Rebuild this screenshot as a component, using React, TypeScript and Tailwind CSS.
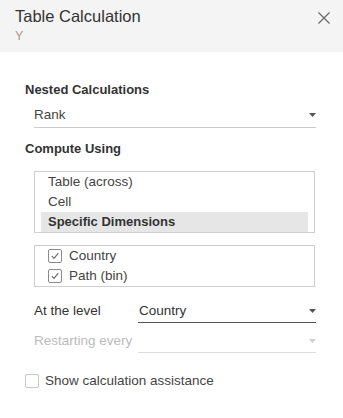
import React from "react";

const Caret = ({ light = false }: { light?: boolean }) => (
  <svg width="7" height="4" viewBox="0 0 7 4" className="shrink-0">
    <path d="M0 0 L7 0 L3.5 4 Z" fill={light ? "#cfcfcf" : "#555"} />
  </svg>
);

const Check = ({ checked }: { checked: boolean }) => (
  <div
    className={`w-[14px] h-[14px] shrink-0 rounded-[2px] border ${
      checked ? "border-[#8a8a8a]" : "border-[#c8c8c8]"
    } bg-white flex items-center justify-center`}
  >
    {checked && (
      <svg width="10" height="10" viewBox="0 0 10 10">
        <path d="M1.8 5.2 L4 7.4 L8.3 2.2" fill="none" stroke="#666" strokeWidth="1.1" />
      </svg>
    )}
  </div>
);

export default function App() {
  return (
    <div
      className="w-[343px] h-[418px] bg-white text-[#333] overflow-hidden"
      style={{ fontFamily: '"Liberation Sans", Arial, sans-serif' }}
    >
      {/* Header */}
      <div className="h-[52px] bg-[#f4f4f4] flex justify-between pl-[15px] pr-[13px]">
        <div className="pt-[6px]">
          <div className="text-[16.5px] leading-[20px] text-[#333]">Table Calculation</div>
          <div className="text-[12.5px] leading-[14px] text-[#b09a80] mt-[3px]">Y</div>
        </div>
        <div className="pt-[12px]">
          <svg width="12" height="12" viewBox="0 0 12 12">
            <path d="M0.5 0.5 L11.5 11.5 M11.5 0.5 L0.5 11.5" stroke="#666" strokeWidth="1.2" />
          </svg>
        </div>
      </div>

      <div className="text-[13.5px] leading-[16px]">
        {/* Nested Calculations */}
        <div className="pl-[25px] mt-[30px] text-[13px] font-bold text-[#333]">Nested Calculations</div>
        <div className="ml-[34px] mr-[27px] mt-[9px] pb-[4px] border-b border-[#cccccc] flex items-center justify-between">
          <span className="text-[#444]">Rank</span>
          <Caret />
        </div>

        {/* Compute Using */}
        <div className="pl-[25px] mt-[13px] text-[13px] font-bold text-[#333]">Compute Using</div>
        <div className="ml-[34px] mr-[28px] mt-[14px] border border-[#cfcfcf] px-[6px] leading-[20px]">
          <div className="pl-[7px] text-[#444]">Table (across)</div>
          <div className="pl-[7px] text-[#444]">Cell</div>
          <div className="pl-[7px] bg-[#e6e6e6] text-[13px] font-bold text-[#333]">Specific Dimensions</div>
        </div>

        <div className="ml-[34px] mr-[28px] mt-[12px] border border-[#cfcfcf] pl-[13px] leading-[20px]">
          <div className="flex items-center gap-[7px] h-[20px]">
            <Check checked />
            <span className="text-[#444]">Country</span>
          </div>
          <div className="flex items-center gap-[7px] h-[20px]">
            <Check checked />
            <span className="text-[#444]">Path (bin)</span>
          </div>
        </div>

        {/* At the level */}
        <div className="ml-[34px] mr-[27px] mt-[16px] flex">
          <div className="w-[104px] text-[#333]">At the level</div>
          <div className="flex-1 pb-[3px] border-b border-[#555] flex items-center justify-between">
            <span className="pl-[1px] text-[#333]">Country</span>
            <Caret />
          </div>
        </div>
        <div className="ml-[34px] mr-[27px] mt-[10px] flex">
          <div className="w-[104px] text-[#bbbbbb]">Restarting every</div>
          <div className="flex-1 pb-[3px] border-b border-[#dddddd] flex items-center justify-end h-[16px] box-content">
            <Caret light />
          </div>
        </div>

        {/* Show calculation assistance */}
        <div className="ml-[25px] mt-[20px] flex items-center gap-[6px]">
          <Check checked={false} />
          <span className="text-[#444]">Show calculation assistance</span>
        </div>
      </div>
    </div>
  );
}
